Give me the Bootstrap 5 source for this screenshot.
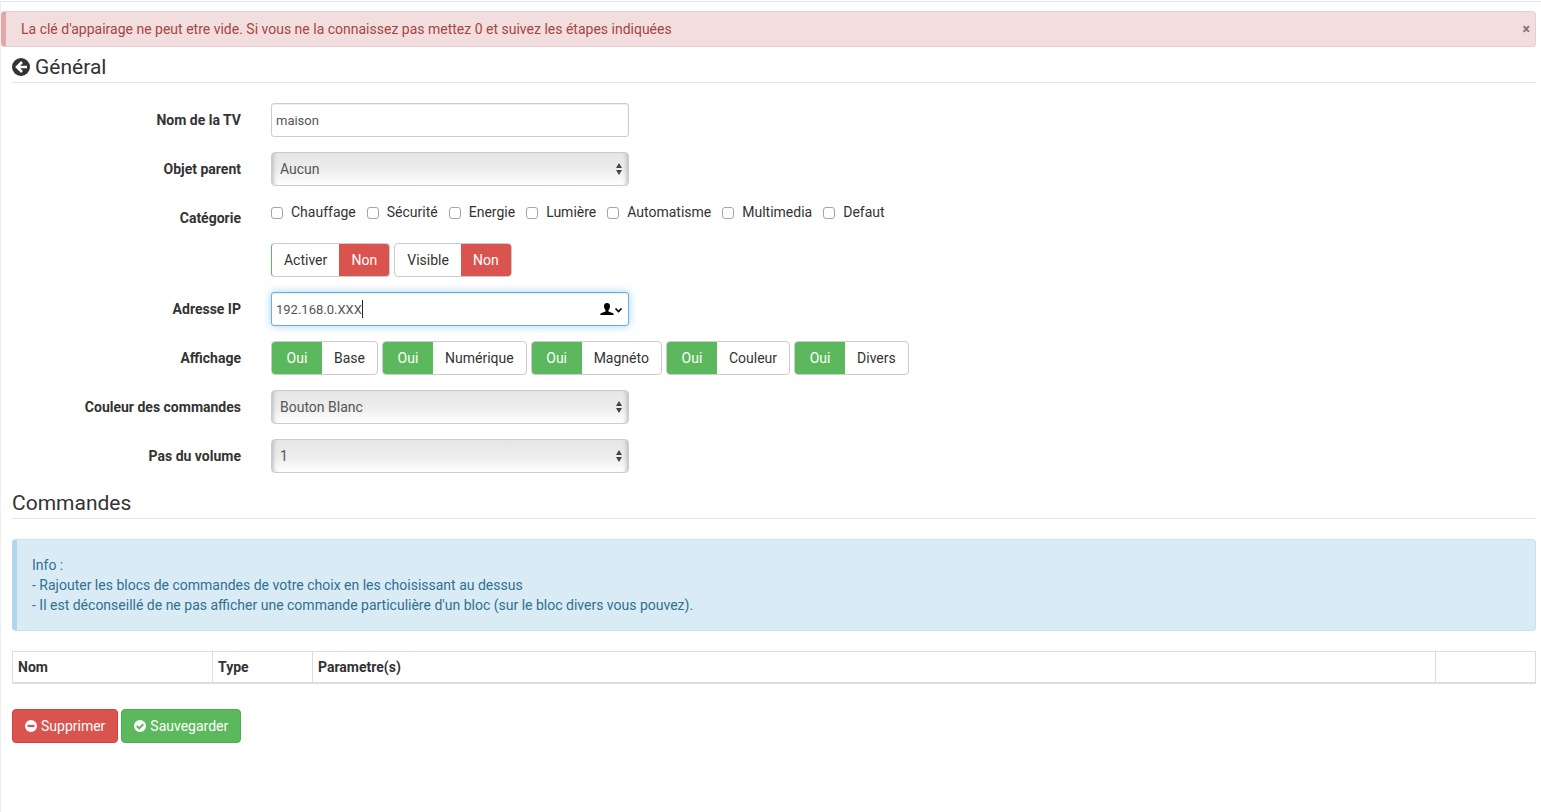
<!DOCTYPE html>
<html lang="fr">
<head>
<meta charset="utf-8">
<meta name="viewport" content="width=device-width, initial-scale=1">
<title>Configuration de la TV</title>
<link href="https://cdn.jsdelivr.net/npm/bootstrap@5.3.0/dist/css/bootstrap.min.css" rel="stylesheet">
<style>
body { font-family: Roboto, "Liberation Sans", sans-serif; font-size: 14px; line-height: 20px; color: #333; background: #fff; }
.page { border-left: 1px solid #eee; margin-top: 1px; border-top: 1px solid #e7e7e7; padding: 9px 5px 24px 0; min-height: 100vh; margin-bottom: -1px; }
.panel-body { padding-left: 11px; }
.alert { border-radius: 4px; }
.alert-key { background: #f2dede; border: 1px solid #ebccd1; border-left: 5px solid #dfa9a9; color: #a94442; padding: 7px 5px 7px 15px; margin-bottom: 5px; }
.alert-note { background: #d9ebf5; border: 1px solid #bce8f1; border-left: 5px solid #b0d5ec; color: #31708f; padding: 15px; margin-bottom: 20px; }
.close-link { border: 0; background: none; padding: 0; color: #7d7475; font-weight: 700; font-size: 14px; line-height: 20px; }
legend { font-size: 21px; line-height: 30px; margin-bottom: 20px; border-bottom: 1px solid #e5e5e5; float: none; }
.back-link { color: #333; line-height: 18px; }
.form-line { --bs-gutter-x: 30px; margin-bottom: 15px; }
.form-line > .title { font-weight: 700; text-align: right; padding-top: 7px; }
.form-control, .form-select { height: 34px; border: 1px solid #ccc; border-radius: 4px; color: #555; line-height: 20px; }
.form-control { font-size: 13px; padding: 6px 4px; border-radius: 3px; box-shadow: inset 0 1px 1px rgba(0,0,0,.075); }
.form-control.active-field, .form-control.active-field:focus { border-color: #66afe9; box-shadow: inset 0 1px 1px rgba(0,0,0,.075), 0 0 8px rgba(102,175,233,.6); color: #555; }
.form-select { font-size: 14px; padding: 6px 24px 6px 8px; box-shadow: inset 5px 0 4px -4px #b4b4b4, inset -5px 0 4px -4px #b4b4b4;
  background-color: #fff;
  background-image: url("data:image/svg+xml,%3Csvg xmlns='http://www.w3.org/2000/svg' width='6' height='12'%3E%3Cpath fill='%23444' d='M0 5L3 0l3 5zM0 7h6L3 12z'/%3E%3C/svg%3E"), linear-gradient(#e6e6e6, #ececec 50%, #fff);
  background-position: right 6px center, 0 0; background-size: 6px 12px, 100% 100%; }
.ticks { gap: 11px; }
.tick { gap: 8px; height: 22px; }
.tick input { appearance: none; width: 12px; height: 12px; margin: 2px 0 0; border: 1px solid #a5a5a5; border-radius: 3px; background: #fff; }
.tick input:checked { background: #337ab7; }
.switch { height: 34px; border: 1px solid #ccc; border-radius: 4px; background: #fff; color: #333; padding: 0; overflow: hidden; }
.switch span { line-height: 32px; padding: 0 12px; }
.switch .state { width: 50px; padding: 0; text-align: center; color: #fff; }
.switch .yes { background: #5cb85c; }
.switch .no { background: #d9534f; }
.switch-on-edge { border-left-color: #5cb85c; }
.caret-bar { position: absolute; left: 106px; top: 8px; width: 1px; height: 18px; background: #222; }
.fill-menu { position: absolute; right: 21px; top: 11px; border: 0; background: none; padding: 0; line-height: 0; }
.cmd-table { border: 1px solid #ddd; margin-bottom: 25px; table-layout: fixed; color: #333; }
.cmd-table th { border: 1px solid #ddd; border-bottom-width: 2px; padding: 5px; color: #333; font-weight: 700; }
.wide { width: 200px; } .narrow { width: 100px; }
.actions { gap: 3px; }
.btn-act { font-size: 14px; line-height: 20px; padding: 6px 12px; border-radius: 4px; color: #fff; gap: 4px; }
.btn-del { background: #d9534f; border-color: #d43f3a; }
.btn-save { background: #5cb85c; border-color: #4cae4c; }
</style>
</head>
<body>
<main class="page">
  <div class="alert alert-key d-flex justify-content-between" role="alert">
    <span>La clé d'appairage ne peut etre vide. Si vous ne la connaissez pas mettez 0 et suivez les étapes indiquées</span>
    <button type="button" class="close-link" aria-label="Fermer" data-bs-dismiss="alert">×</button>
  </div>
  <div class="panel-body">
    <form>
      <fieldset>
        <legend class="d-flex align-items-center gap-1">
          <a href="#" class="back-link" aria-label="Retour"><svg width="19" height="18" viewBox="0 0 19 18" class="d-block"><circle cx="9" cy="9" r="9" fill="#333"/><path d="M10 4L5 9l5 5M5.500 9H15" fill="none" stroke="#fff" stroke-width="2.600"/></svg></a>
          Général
        </legend>
        <div class="row form-line">
          <label class="col-2 title" for="nom">Nom de la TV</label>
          <div class="col-3"><input id="nom" type="text" class="form-control" value="maison"></div>
        </div>
        <div class="row form-line">
          <label class="col-2 title" for="parent">Objet parent</label>
          <div class="col-3"><select id="parent" class="form-select"><option>Aucun</option></select></div>
        </div>
        <div class="row form-line">
          <div class="col-2 title" id="cat">Catégorie</div>
          <div class="col-10 d-flex align-items-start ticks" role="group" aria-labelledby="cat">
            <label class="tick d-flex align-items-center"><input type="checkbox">Chauffage</label>
            <label class="tick d-flex align-items-center"><input type="checkbox">Sécurité</label>
            <label class="tick d-flex align-items-center"><input type="checkbox">Energie</label>
            <label class="tick d-flex align-items-center"><input type="checkbox">Lumière</label>
            <label class="tick d-flex align-items-center"><input type="checkbox">Automatisme</label>
            <label class="tick d-flex align-items-center"><input type="checkbox">Multimedia</label>
            <label class="tick d-flex align-items-center"><input type="checkbox">Defaut</label>
          </div>
        </div>
        <div class="row form-line">
          <div class="col-10 offset-2 d-flex gap-1">
            <button type="button" role="switch" aria-checked="false" class="switch switch-on-edge d-flex"><span>Activer</span><span class="state no">Non</span></button>
            <button type="button" role="switch" aria-checked="false" class="switch d-flex"><span>Visible</span><span class="state no">Non</span></button>
          </div>
        </div>
        <div class="row form-line">
          <label class="col-2 title" for="ip">Adresse IP</label>
          <div class="col-3 position-relative">
            <input id="ip" type="text" class="form-control active-field" value="192.168.0.XXX">
            <span class="caret-bar"></span>
            <button type="button" class="fill-menu" aria-label="Remplissage automatique"><svg width="23" height="13" viewBox="0 0 23 13"><path d="M7 0C4.900 0 3.800 1.300 4 3.200c.1 1.800.6 3 1.500 3.800v1.600L1.500 10C.6 10.300.3 11 .3 12h13.400c0-1-.3-1.700-1.200-2L8.500 8.600V7c.9-.8 1.400-2 1.500-3.800C10.200 1.300 9.100 0 7 0z" fill="#000"/><path d="M15.500 5.500L18.500 8.500l3-3" fill="none" stroke="#000" stroke-width="1.700"/></svg></button>
          </div>
        </div>
        <div class="row form-line">
          <div class="col-2 title" id="aff">Affichage</div>
          <div class="col-10 d-flex gap-1" role="group" aria-labelledby="aff">
            <button type="button" role="switch" aria-checked="true" class="switch d-flex"><span class="state yes">Oui</span><span>Base</span></button>
            <button type="button" role="switch" aria-checked="true" class="switch d-flex"><span class="state yes">Oui</span><span>Numérique</span></button>
            <button type="button" role="switch" aria-checked="true" class="switch d-flex"><span class="state yes">Oui</span><span>Magnéto</span></button>
            <button type="button" role="switch" aria-checked="true" class="switch d-flex"><span class="state yes">Oui</span><span>Couleur</span></button>
            <button type="button" role="switch" aria-checked="true" class="switch d-flex"><span class="state yes">Oui</span><span>Divers</span></button>
          </div>
        </div>
        <div class="row form-line">
          <label class="col-2 title" for="couleur">Couleur des commandes</label>
          <div class="col-3"><select id="couleur" class="form-select"><option>Bouton Blanc</option></select></div>
        </div>
        <div class="row form-line">
          <label class="col-2 title" for="pas">Pas du volume</label>
          <div class="col-3"><select id="pas" class="form-select"><option>1</option></select></div>
        </div>
      </fieldset>
    </form>
    <legend>Commandes</legend>
    <div class="alert alert-note">Info :<br>- Rajouter les blocs de commandes de votre choix en les choisissant au dessus<br>- Il est déconseillé de ne pas afficher une commande particulière d'un bloc (sur le bloc divers vous pouvez).</div>
    <table class="table cmd-table">
      <thead><tr><th class="wide">Nom</th><th class="narrow">Type</th><th>Parametre(s)</th><th class="narrow"></th></tr></thead>
    </table>
    <div class="d-flex actions">
      <button type="button" class="btn btn-act btn-del d-flex align-items-center"><svg width="12" height="12" viewBox="0 0 12 12"><circle cx="6" cy="6" r="6" fill="#fff"/><path d="M2.500 6h7" stroke="#d9534f" stroke-width="2.200"/></svg>Supprimer</button>
      <button type="button" class="btn btn-act btn-save d-flex align-items-center"><svg width="12" height="12" viewBox="0 0 12 12"><circle cx="6" cy="6" r="6" fill="#fff"/><path d="M2.800 6l2.400 2.400 4-4.200" fill="none" stroke="#5cb85c" stroke-width="2"/></svg>Sauvegarder</button>
    </div>
  </div>
</main>
<script src="https://cdn.jsdelivr.net/npm/bootstrap@5.3.0/dist/js/bootstrap.bundle.min.js"></script>
</body>
</html>
